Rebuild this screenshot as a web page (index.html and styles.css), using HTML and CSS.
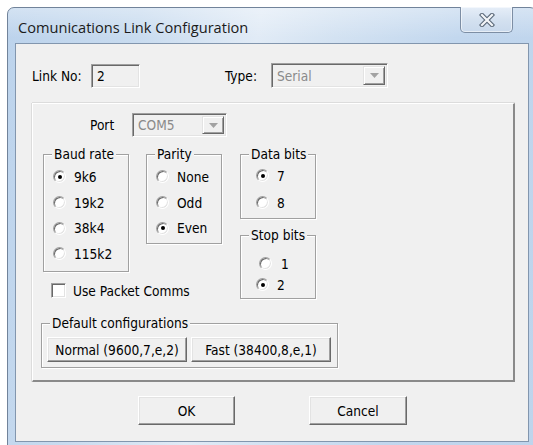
FILE: index.html
```html
<!DOCTYPE html>
<html>
<head>
<meta charset="utf-8">
<title>Comunications Link Configuration</title>
<link rel="stylesheet" href="styles.css">
</head>
<body>
<div class="window">
  <div class="titlebar">
    <span class="title">Comunications Link Configuration</span>
    <div class="close">
      <svg width="16" height="14" viewBox="0 0 16 14">
        <path d="M3 2 L13 12 M13 2 L3 12" stroke="#5b6979" stroke-width="4.4" stroke-linecap="square" fill="none"/>
        <path d="M3 2 L13 12 M13 2 L3 12" stroke="#f4f6f9" stroke-width="2.2" stroke-linecap="square" fill="none"/>
      </svg>
    </div>
  </div>

  <div class="client">
    <div class="top-row">
      <span class="link-lbl">Link No:</span>
      <div class="edit link-edit">2</div>
      <span class="type-lbl">Type:</span>
      <div class="combo type-combo">
        <span class="combo-text">Serial</span>
        <span class="drop"><svg width="9" height="5" viewBox="0 0 9 5"><path d="M0 0 H9 L4.5 5 Z" fill="#a2a2a2"/></svg></span>
      </div>
    </div>

    <div class="frame">
      <div class="port-row">
        <span class="port-lbl">Port</span>
        <div class="combo port-combo">
          <span class="combo-text">COM5</span>
          <span class="drop"><svg width="9" height="5" viewBox="0 0 9 5"><path d="M0 0 H9 L4.5 5 Z" fill="#a2a2a2"/></svg></span>
        </div>
      </div>

      <div class="groups">
        <div class="col-left">
          <div class="pair">
            <div class="group baud">
              <span class="group-title">Baud rate</span>
              <div class="opt"><span class="radio on"></span>9k6</div>
              <div class="opt"><span class="radio"></span>19k2</div>
              <div class="opt"><span class="radio"></span>38k4</div>
              <div class="opt"><span class="radio"></span>115k2</div>
            </div>
            <div class="group parity">
              <span class="group-title">Parity</span>
              <div class="opt"><span class="radio"></span>None</div>
              <div class="opt"><span class="radio"></span>Odd</div>
              <div class="opt"><span class="radio on"></span>Even</div>
            </div>
          </div>
          <div class="check-row"><span class="check"></span>Use Packet Comms</div>
        </div>
        <div class="col-right">
          <div class="group databits">
            <span class="group-title">Data bits</span>
            <div class="opt"><span class="radio on"></span>7</div>
            <div class="opt"><span class="radio"></span>8</div>
          </div>
          <div class="group stopbits">
            <span class="group-title">Stop bits</span>
            <div class="opt shifted"><span class="radio"></span>1</div>
            <div class="opt"><span class="radio on"></span>2</div>
          </div>
        </div>
      </div>

      <div class="group defaults">
        <span class="group-title">Default configurations</span>
        <div class="btn cfg-btn">Normal (9600,7,e,2)</div>
        <div class="btn cfg-btn">Fast (38400,8,e,1)</div>
      </div>
    </div>

    <div class="buttons">
      <div class="btn ok-btn">OK</div>
      <div class="btn cancel-btn">Cancel</div>
    </div>
  </div>
</div>
</body>
</html>
```

FILE: styles.css
```css
html, body {
  margin: 0;
  height: 100%;
}

body {
  background: #fff;
  overflow: hidden;
  font-family: "DejaVu Sans Condensed", "DejaVu Sans", sans-serif;
  font-size: 13.6px;
  color: #000;
}

/* Aero-style window frame */
.window {
  margin: 7px 0 0 7px;
  width: 530px;
  height: 443px;
  box-sizing: border-box;
  border: 1px solid #71839a;
  border-radius: 7px 7px 0 0;
  padding: 0 7px 7px;
  background:
    linear-gradient(180deg, rgba(255,255,255,0.35) 0, rgba(255,255,255,0) 30px),
    linear-gradient(100deg, #bcd3ec 0%, #c8dbef 22%, #e1ebf6 42%, #d3e2f2 55%, #c2d7ee 75%, #bed4ec 100%);
  display: flex;
  flex-direction: column;
}

.titlebar {
  height: 35px;
  flex: none;
  display: flex;
  justify-content: space-between;
  align-items: flex-start;
}

.title {
  font-family: "Open Sans", "Noto Sans", sans-serif;
  font-size: 14.6px;
  color: #1b1b1b;
  padding: 9px 0 0 3px;
}

.close {
  width: 53px;
  height: 26px;
  box-sizing: border-box;
  margin: -1px 16px 0 0;
  border: 1px solid #7d8ea4;
  border-top: none;
  border-radius: 0 0 5px 5px;
  background: linear-gradient(180deg, #e6eef8 0%, #d4e1f0 50%, #c9d9ec 100%);
  box-shadow: inset 0 0 0 1px rgba(255,255,255,0.55);
  display: flex;
  align-items: center;
  justify-content: center;
}

.client {
  flex: none;
  height: 399px;
  box-sizing: border-box;
  border: 1px solid #8296ae;
  background: #f0f0f0;
  padding: 19px 0 0 16px;
}

/* Link No / Type row */
.top-row {
  display: flex;
  align-items: center;
  height: 25px;
}

.link-lbl { width: 59px; }

.edit {
  box-sizing: border-box;
  border: 1px solid;
  border-color: #a0a0a0 #fff #fff #a0a0a0;
  box-shadow: inset 1px 1px 0 #696969, inset -1px -1px 0 #e3e3e3;
  background: #f0f0f0;
}

.link-edit {
  width: 49px;
  height: 24px;
  padding: 3px 0 0 5px;
}

.type-lbl {
  margin-left: 85px;
  width: 46px;
}

.combo {
  box-sizing: border-box;
  display: flex;
  align-items: center;
  justify-content: space-between;
  border: 1px solid;
  border-color: #a0a0a0 #fff #fff #a0a0a0;
  box-shadow: inset 1px 1px 0 #696969, inset -1px -1px 0 #e3e3e3;
  background: #f0f0f0;
  padding: 2px;
}

.combo-text {
  color: #8a8a8a;
  padding-left: 3px;
}

.type-combo { width: 117px; height: 25px; }
.port-combo { width: 95px; height: 24px; }

.drop {
  box-sizing: border-box;
  width: 22px;
  height: 100%;
  border: 1px solid;
  border-color: #e3e3e3 #696969 #696969 #e3e3e3;
  box-shadow: inset 1px 1px 0 #fff, inset -1px -1px 0 #a0a0a0;
  background: #f0f0f0;
  display: flex;
  align-items: center;
  justify-content: center;
}

/* Raised serial settings panel */
.frame {
  margin-top: 15px;
  width: 483px;
  height: 279px;
  box-sizing: border-box;
  border-style: solid;
  border-width: 1px 2px 2px 1px;
  border-color: #fff #8a8a8a #8a8a8a #fff;
  box-shadow: 0 -1px 0 #dcdcdc, -1px 0 0 #dcdcdc;
}

.port-row {
  display: flex;
  align-items: center;
  margin-top: 9px;
  padding-left: 57px;
}

.port-lbl { width: 42px; }

.groups {
  display: flex;
  margin-top: 17px;
  padding-left: 10px;
}

.pair {
  display: flex;
  align-items: flex-start;
  gap: 17px;
}

.col-right {
  margin-left: 18px;
  display: flex;
  flex-direction: column;
  gap: 16px;
}

/* Etched group boxes */
.group {
  position: relative;
  box-sizing: border-box;
  border: 1px solid #a0a0a0;
  box-shadow: inset 1px 1px 0 #fff, 1px 1px 0 #fff;
  display: flex;
  flex-direction: column;
}

.group-title {
  position: absolute;
  top: -9px;
  left: 8px;
  padding: 0 2px;
  background: #f0f0f0;
  line-height: 16px;
}

.baud   { width: 86px; height: 118px; padding: 9px 0 0 9px; }
.parity { width: 76px; height: 90px;  padding: 9px 0 0 9px; }
.databits { width: 76px; height: 65px; padding: 7px 0 0 15px; }
.stopbits { width: 76px; height: 64px; padding: 17px 0 0 15px; }

.opt {
  display: flex;
  align-items: center;
  gap: 8px;
  height: 25.7px;
}

.databits .opt { height: 27px; }
.stopbits .opt { height: 21px; }
.stopbits .shifted { margin-left: 3px; gap: 9px; }

.radio {
  position: relative;
  flex: none;
  width: 13px;
  height: 13px;
  box-sizing: border-box;
  border-radius: 50%;
  border: 1px solid;
  border-color: #a0a0a0 #fff #fff #a0a0a0;
  box-shadow: inset 1px 1px 0 #696969, inset -1px -1px 0 #e3e3e3;
  background: #fff;
}

.radio.on::after {
  content: "";
  position: absolute;
  left: 3.5px;
  top: 3.5px;
  width: 4px;
  height: 4px;
  border-radius: 50%;
  background: #000;
}

.check-row {
  display: flex;
  align-items: center;
  gap: 7px;
  margin: 11px 0 0 8px;
  height: 15px;
}

.check {
  flex: none;
  width: 15px;
  height: 15px;
  box-sizing: border-box;
  border: 1px solid;
  border-color: #a0a0a0 #fff #fff #a0a0a0;
  box-shadow: inset 1px 1px 0 #696969, inset -1px -1px 0 #e3e3e3;
  background: #fff;
}

.defaults {
  margin: 24px 0 0 8px;
  width: 297px;
  height: 45px;
  flex-direction: row;
  align-items: flex-start;
  gap: 4px;
  padding: 13px 0 0 5px;
}

/* Classic push buttons */
.btn {
  box-sizing: border-box;
  display: flex;
  align-items: center;
  justify-content: center;
  border: 1px solid;
  border-color: #fff #696969 #696969 #fff;
  box-shadow: inset -1px -1px 0 #a0a0a0, inset 1px 1px 0 #e3e3e3;
  background: #f0f0f0;
  white-space: nowrap;
}

.cfg-btn { width: 140px; height: 25px; }

.buttons {
  display: flex;
  gap: 74px;
  margin-top: 14px;
  padding-left: 106px;
}

.ok-btn { width: 97px; height: 29px; }
.cancel-btn { width: 98px; height: 29px; }
```
